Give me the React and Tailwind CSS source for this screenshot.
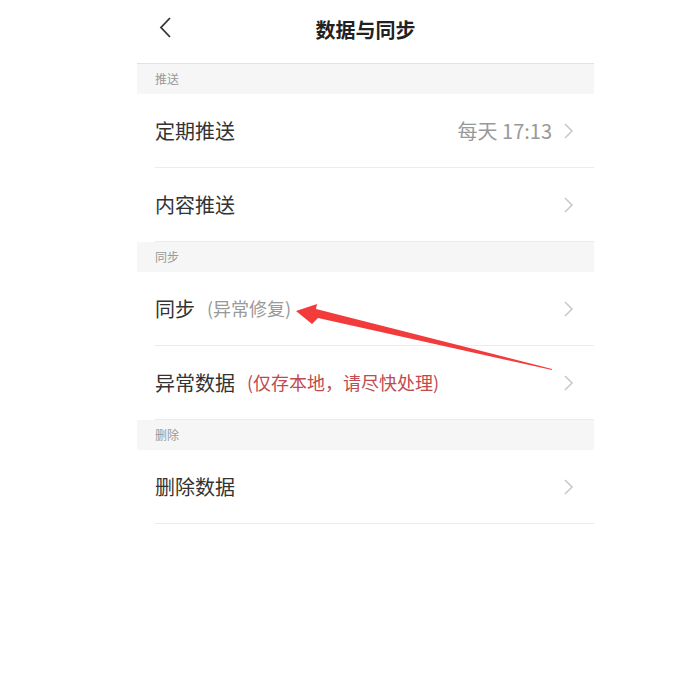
import React from 'react'

const font = { fontFamily: '"Noto Sans CJK SC", "Noto Sans", sans-serif' }

function Chevron() {
  return (
    <svg width="12" height="16" viewBox="0 0 12 16" className="shrink-0">
      <path d="M2 1 L9 8 L2 15" fill="none" stroke="#c8c8c8" strokeWidth="1.5" />
    </svg>
  )
}

function Section({ title }) {
  return (
    <div className="h-[30px] bg-[#f6f6f6] pl-[18px] flex items-center text-[12px] text-[#999]">
      {title}
    </div>
  )
}

function Row({ children, right }) {
  return (
    <div className="ml-[18px] h-[74px] border-b border-[#ececec] flex items-center pr-[19px]">
      <div className="flex-1 flex items-center text-[20px] text-[#333]">{children}</div>
      {right ? <span className="text-[20px] text-[#999] mr-[11px]">{right}</span> : null}
      <Chevron />
    </div>
  )
}

export default function App() {
  return (
    <div className="relative w-[696px] h-[679px] bg-white" style={font}>
      <div className="ml-[137px] w-[457px]">
        <div className="h-[64px] border-b border-[#e2e2e2] flex items-center relative">
          <svg width="14" height="22" viewBox="0 0 14 22" className="absolute left-[22px] top-[17px]">
            <path d="M11 1 L2 10.5 L11 20" fill="none" stroke="#333" strokeWidth="1.8" />
          </svg>
          <div className="flex-1 text-center text-[20px] font-bold text-[#222] pb-[3px]">数据与同步</div>
        </div>
        <Section title="推送" />
        <Row right="每天 17:13">定期推送</Row>
        <Row>内容推送</Row>
        <Section title="同步" />
        <Row>
          同步
          <span className="ml-[12px] text-[18px] text-[#999]">(异常修复)</span>
        </Row>
        <Row>
          异常数据
          <span className="ml-[12px] text-[18px] text-[#c04a4e]">(仅存本地，请尽快处理)</span>
        </Row>
        <Section title="删除" />
        <Row>删除数据</Row>
      </div>
      <svg width="696" height="679" className="absolute left-0 top-0 pointer-events-none">
        <polygon
          points="296,311 317,304 316,309 552,369 552,370 318,318 312,324"
          fill="#f23b3b"
        />
      </svg>
    </div>
  )
}
